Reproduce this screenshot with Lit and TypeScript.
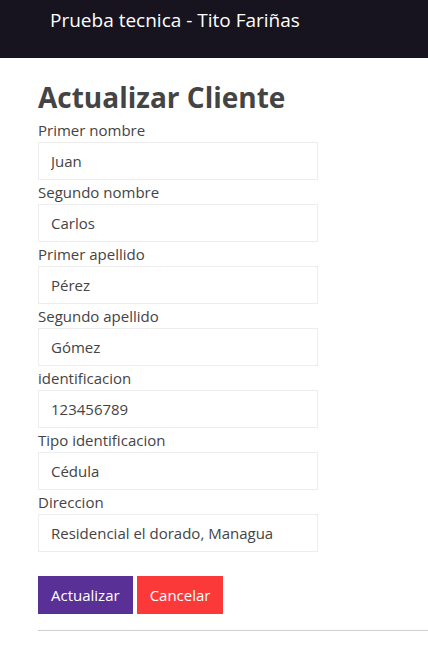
import { LitElement, html, css } from "lit";
import { customElement, state } from "lit/decorators.js";

interface Field {
  id: string;
  label: string;
  value: string;
}

@customElement("app-root")
export class AppRoot extends LitElement {
  static styles = css`
    :host {
      display: block;
      background: #fff;
      color: #444;
      font-family: "Segoe UI", "Open Sans", "Noto Sans", sans-serif;
      font-size: 15px;
      line-height: 24px;
    }
    * {
      box-sizing: border-box;
    }
    .navbar {
      display: flex;
      align-items: flex-start;
      padding: 5px 50px 23px;
      background: #17141f;
    }
    .brand {
      color: #fff;
      font-size: 19px;
      line-height: 30px;
      text-decoration: none;
    }
    main {
      padding: 20px 0 16px 38px;
    }
    h1 {
      margin: 0 0 2px;
      font-size: 28px;
      font-weight: 700;
      line-height: 38px;
    }
    .field {
      display: flex;
      flex-direction: column;
      width: 280px;
      max-width: 100%;
    }
    input {
      width: 100%;
      height: 38px;
      margin: 0;
      padding: 6px 12px;
      border: 1px solid #ededed;
      border-radius: 0;
      background: #fff;
      color: #444;
      font: inherit;
    }
    .actions {
      display: flex;
      gap: 4px;
      margin-top: 24px;
    }
    button {
      height: 38px;
      padding: 6px 12px;
      border: 1px solid transparent;
      color: #fff;
      font: inherit;
      cursor: pointer;
    }
    .primary {
      border-color: #593196;
      background: #593196;
    }
    .danger {
      border-color: #fc3939;
      background: #fc3939;
    }
    hr {
      margin: 16px 0 0;
      border: 0;
      border-top: 1px solid #cfcfcf;
    }
  `;

  @state()
  private fields: Field[] = [
    { id: "primer-nombre", label: "Primer nombre", value: "Juan" },
    { id: "segundo-nombre", label: "Segundo nombre", value: "Carlos" },
    { id: "primer-apellido", label: "Primer apellido", value: "Pérez" },
    { id: "segundo-apellido", label: "Segundo apellido", value: "Gómez" },
    { id: "identificacion", label: "identificacion", value: "123456789" },
    { id: "tipo", label: "Tipo identificacion", value: "Cédula" },
    { id: "direccion", label: "Direccion", value: "Residencial el dorado, Managua" },
  ];

  render() {
    return html`
      <header class="navbar">
        <a class="brand" href="#">Prueba tecnica - Tito Fariñas</a>
      </header>
      <main>
        <h1>Actualizar Cliente</h1>
        <form @submit=${(e: Event) => e.preventDefault()}>
          ${this.fields.map(
            (f) => html`
              <div class="field">
                <label for=${f.id}>${f.label}</label>
                <input id=${f.id} type="text" .value=${f.value} />
              </div>
            `
          )}
          <div class="actions">
            <button class="primary" type="submit">Actualizar</button>
            <button class="danger" type="button">Cancelar</button>
          </div>
        </form>
        <hr />
      </main>
    `;
  }
}
